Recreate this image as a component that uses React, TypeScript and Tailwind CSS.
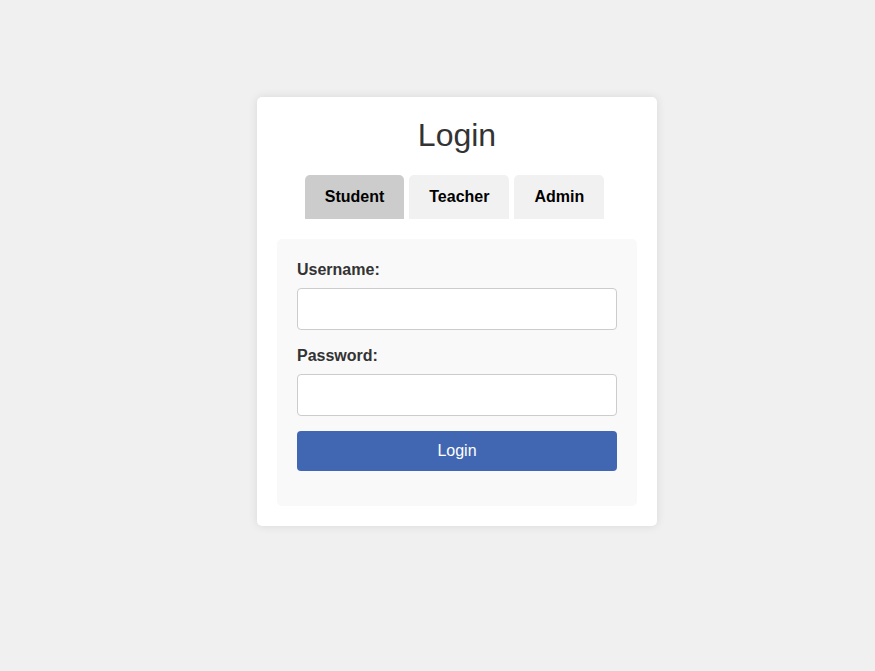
import React from "react";

export default function App() {
  const [tab, setTab] = React.useState("Student");
  return (
    <div className="min-h-screen bg-[#f0f0f0] pt-[97px] pl-[39px] font-['Liberation_Sans',Arial,sans-serif]">
      <div className="mx-auto w-[400px] rounded-[5px] bg-white p-[20px] shadow-[0_0_10px_rgba(0,0,0,0.1)]">
        <h2 className="m-0 text-center text-[32px] leading-[37px] font-normal text-[#333]">Login</h2>
        <div className="mt-[21px] flex justify-center">
          {["Student", "Teacher", "Admin"].map((t) => (
            <button
              key={t}
              onClick={() => setTab(t)}
              className={`mr-[5px] h-[44px] rounded-t-[5px] px-[20px] text-[16px] font-bold text-black ${
                tab === t ? "bg-[#ccc]" : "bg-[#f1f1f1]"
              }`}
            >
              {t}
            </button>
          ))}
        </div>
        <div className="mt-[20px] rounded-[5px] bg-[#f9f9f9] px-[20px] pt-[20px] pb-[35px]">
          <label className="block text-[16px] leading-[22px] font-bold text-[#333]">Username:</label>
          <input
            type="text"
            className="mt-[7px] block h-[42px] w-full rounded-[4px] border border-[#ccc] bg-white px-[10px] text-[16px] outline-none"
          />
          <label className="mt-[15px] block text-[16px] leading-[22px] font-bold text-[#333]">Password:</label>
          <input
            type="password"
            className="mt-[7px] block h-[42px] w-full rounded-[4px] border border-[#ccc] bg-white px-[10px] text-[16px] outline-none"
          />
          <button className="mt-[15px] block h-[40px] w-full rounded-[4px] bg-[#4267b2] text-[16px] text-white">
            Login
          </button>
        </div>
      </div>
    </div>
  );
}
